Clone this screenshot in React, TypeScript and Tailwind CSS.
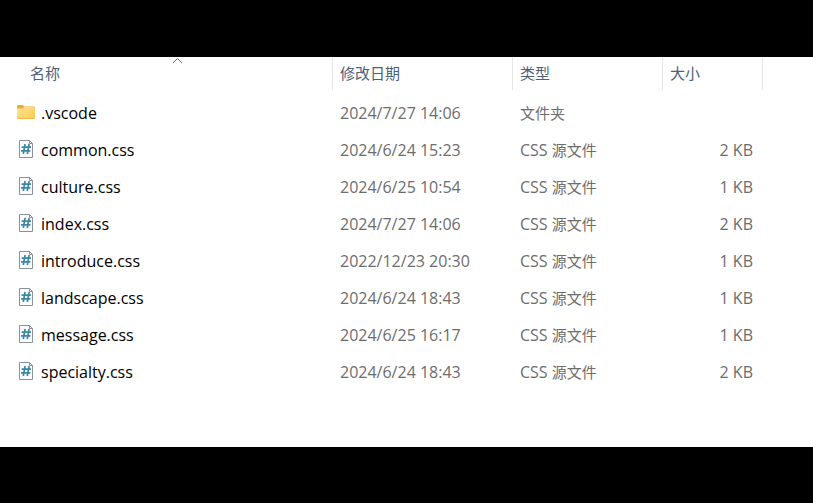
type FileEntry = {
  name: string
  date: string
  kind: "folder" | "css"
  size?: string
}

const files: FileEntry[] = [
  { name: ".vscode", date: "2024/7/27 14:06", kind: "folder" },
  { name: "common.css", date: "2024/6/24 15:23", kind: "css", size: "2 KB" },
  { name: "culture.css", date: "2024/6/25 10:54", kind: "css", size: "1 KB" },
  { name: "index.css", date: "2024/7/27 14:06", kind: "css", size: "2 KB" },
  { name: "introduce.css", date: "2022/12/23 20:30", kind: "css", size: "1 KB" },
  { name: "landscape.css", date: "2024/6/24 18:43", kind: "css", size: "1 KB" },
  { name: "message.css", date: "2024/6/25 16:17", kind: "css", size: "1 KB" },
  { name: "specialty.css", date: "2024/6/24 18:43", kind: "css", size: "2 KB" },
]

function FolderIcon() {
  return (
    <svg className="mb-[2px]" width="18" height="20" viewBox="0 0 18 20" aria-hidden="true">
      <defs>
        <linearGradient id="folder" x1="0" y1="0" x2="1" y2="1">
          <stop offset="0" stopColor="#ffe391" />
          <stop offset="1" stopColor="#f7cb55" />
        </linearGradient>
      </defs>
      <path d="M0 4.2Q0 3 1.2 3H5.6L7.4 4.6H17Q18 4.6 18 5.6V10H0Z" fill="#e8b02e" />
      <path d="M0 6.6H5.6L7.4 5H17Q18 5 18 6V15.8Q18 17 16.8 17H1.2Q0 17 0 15.8Z" fill="url(#folder)" />
      <path d="M.5 16.6H17.5" stroke="#e3b23e" strokeWidth="0.8" />
    </svg>
  )
}

function CssIcon() {
  return (
    <svg className="mb-[2px]" width="18" height="20" viewBox="0 0 18 20" aria-hidden="true">
      <path d="M2.5 1.5H12.5L15.5 4.5V18.5H2.5Z" fill="#fbfcfd" stroke="#8a9299" />
      <path d="M12.5 1.5V4.5H15.5" fill="none" stroke="#8a9299" />
      <path d="M8.1 5L6.3 15M12.1 5L10.3 15M4.6 8.2H14M4 11.8H13.4" fill="none" stroke="#3d86a8" strokeWidth="1.7" />
    </svg>
  )
}

function SortArrow() {
  return (
    <span className="absolute top-0 right-0 left-[22px] flex justify-center">
      <svg width="11" height="7" viewBox="0 0 11 7" aria-hidden="true">
        <path d="M1 6L5.5 1.5L10 6" fill="none" stroke="#6b6b6b" />
      </svg>
    </span>
  )
}

function HeaderRow() {
  return (
    <tr className="h-[33px] text-left text-[15px] leading-5 text-[#4c607a]">
      <th className="relative border-r border-[#e5e5e5] pb-[2px] pl-[30px] font-normal" aria-sort="ascending">
        <SortArrow />
        <button>名称</button>
      </th>
      <th className="border-r border-[#e5e5e5] pb-[2px] pl-[7px] font-normal"><button>修改日期</button></th>
      <th className="border-r border-[#e5e5e5] pb-[2px] pl-[7px] font-normal"><button>类型</button></th>
      <th className="border-r border-[#e5e5e5] pb-[2px] pl-[7px] font-normal"><button>大小</button></th>
    </tr>
  )
}

function FileRow({ file }: { file: FileEntry }) {
  return (
    <tr className="h-[37px] text-base leading-5 text-[#6d6d6d]">
      <td className="pl-[17px]">
        <div className="flex items-center gap-[6px] text-black">
          {file.kind === "folder" ? <FolderIcon /> : <CssIcon />}
          <span>{file.name}</span>
        </div>
      </td>
      <td className="pl-[7px]">{file.date}</td>
      <td className="pl-[7px]">
        {file.kind === "css" && "CSS "}
        <span className="text-[15px]">{file.kind === "folder" ? "文件夹" : "源文件"}</span>
      </td>
      <td className="pr-[10px] text-right">{file.size}</td>
    </tr>
  )
}

export default function App() {
  return (
    <div className="flex min-h-screen flex-col bg-black pt-[57px] pb-14 font-['Open_Sans','Noto_Sans_CJK_SC',sans-serif]">
      <main className="grow bg-white pr-[50px]">
        <table className="w-full table-fixed border-separate border-spacing-0">
          <colgroup>
            <col />
            <col className="w-[180px]" />
            <col className="w-[150px]" />
            <col className="w-[100px]" />
          </colgroup>
          <thead>
            <HeaderRow />
          </thead>
          <tbody className="before:block before:h-1">
            {files.map((file) => (
              <FileRow key={file.name} file={file} />
            ))}
          </tbody>
        </table>
      </main>
    </div>
  )
}
